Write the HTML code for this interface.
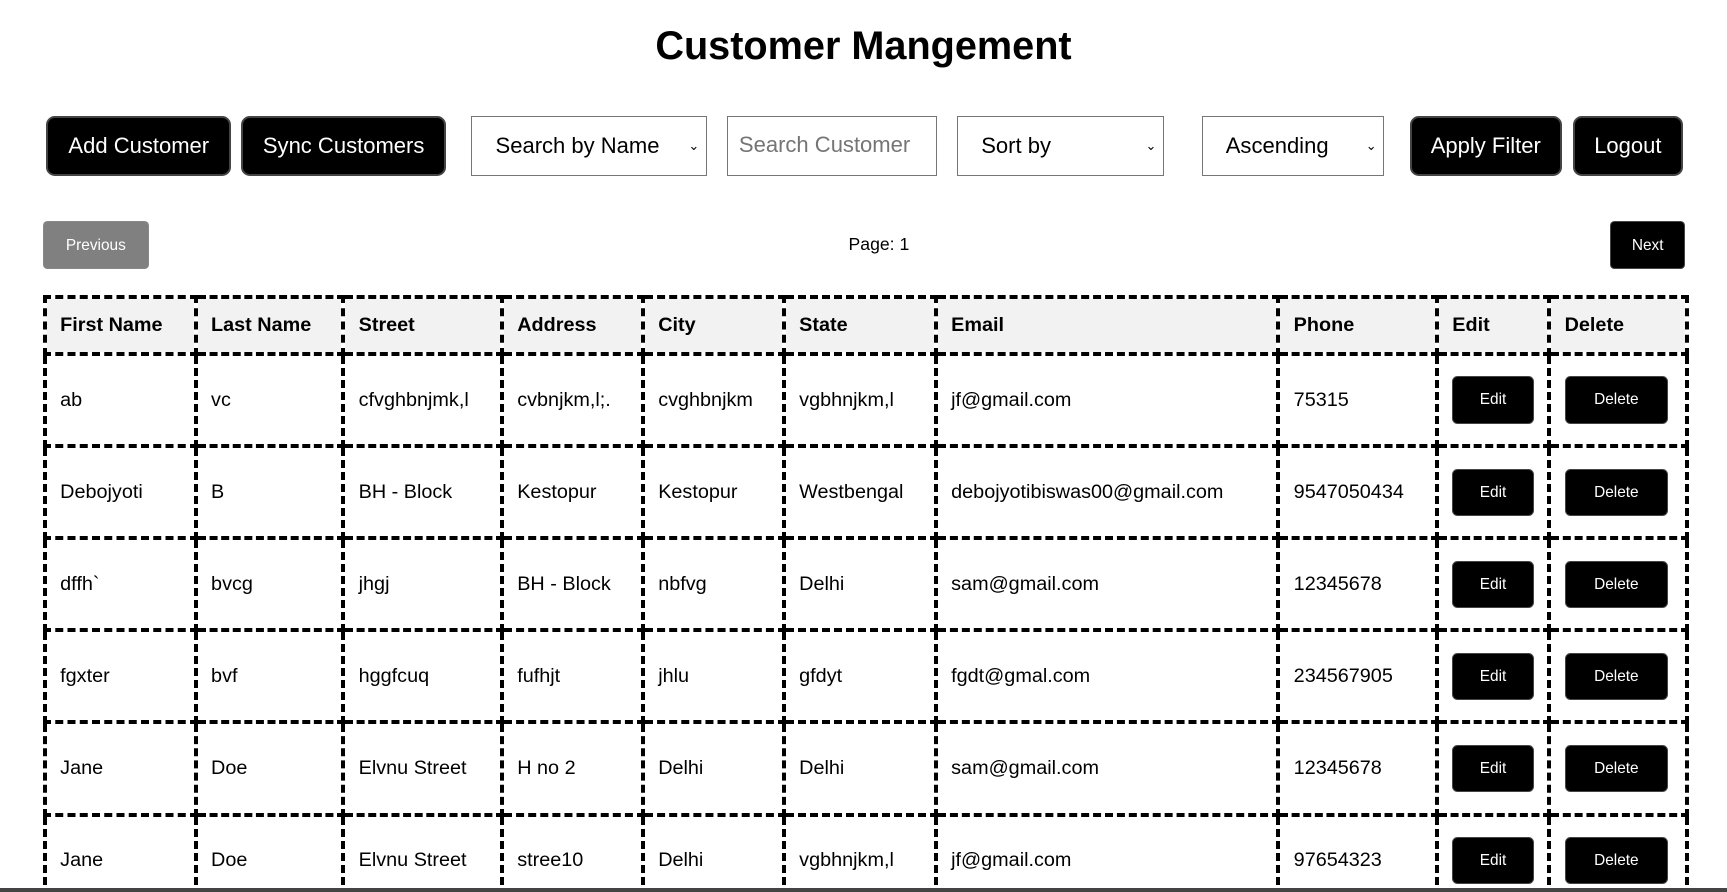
<!DOCTYPE html>
<html><head><meta charset="utf-8"><style>
html{zoom:1.1014;overflow:hidden}
body{margin:0;width:1568px;height:810px;overflow:hidden;background:#fff;font-family:"Liberation Sans",Arial,sans-serif;color:#000;position:relative}
#w{position:absolute;left:0;top:0;width:1568px;height:806px;overflow:hidden}
h1{position:absolute;left:0;width:1568px;top:20px;margin:0;text-align:center;font-size:36px;font-weight:bold;line-height:44px}
.b{position:absolute;box-sizing:border-box;background:#000;color:#fff;border:2px solid #444;border-radius:8px;font-size:20px;text-align:center;top:105px;height:55px;line-height:51px}
.s{position:absolute;box-sizing:border-box;background:#fff;border:1px solid #767676;top:105px;height:55px;line-height:53px;font-size:20px;padding-left:21px}
.s .ar{position:absolute;right:6px;top:0;font-size:12px}
.pg{position:absolute;top:201px;height:43px;line-height:43px;font-size:14px;color:#fff;text-align:center;border-radius:4px;box-sizing:border-box}
table{position:absolute;left:39px;top:268px;width:1491px;border-collapse:collapse;table-layout:fixed;border:4px dashed #000}
td,th{border:4px dashed #000;padding:0 0 0 12px;text-align:left;font-size:18px;vertical-align:middle;white-space:nowrap;overflow:hidden}
th{background:#f2f2f2;height:48px;font-weight:bold}
td{height:80px}
.eb{display:inline-block;background:#000;color:#fff;border:1px solid #444;border-radius:5px;height:43px;line-height:41px;font-size:14px;text-align:center;box-sizing:border-box}
.bot{position:absolute;left:0;top:806px;width:1568px;height:4px;background:#444}
</style></head><body>
<div id="w">
<h1>Customer Mangement</h1>
<div class="b" style="left:42px;width:168px">Add Customer</div>
<div class="b" style="left:219px;width:186px">Sync Customers</div>
<div class="s" style="left:428px;width:214px">Search by Name<span class="ar">&#8964;</span></div>
<div class="s" style="left:660px;width:191px;color:#757575;padding-left:10px;line-height:51px">Search Customer</div>
<div class="s" style="left:869px;width:188px">Sort by<span class="ar">&#8964;</span></div>
<div class="s" style="left:1091px;width:166px">Ascending<span class="ar">&#8964;</span></div>
<div class="b" style="left:1280px;width:138px">Apply Filter</div>
<div class="b" style="left:1428px;width:100px">Logout</div>
<div class="pg" style="left:39px;width:96px;background:#808080;border:1px solid #888">Previous</div>
<div style="position:absolute;left:698px;width:200px;text-align:center;top:201px;line-height:43px;font-size:16px">Page: 1</div>
<div class="pg" style="left:1462px;width:68px;background:#000;border:1px solid #444">Next</div>
<table>
<colgroup><col style="width:137px"><col style="width:134px"><col style="width:144px"><col style="width:128px"><col style="width:128px"><col style="width:138px"><col style="width:311px"><col style="width:144px"><col style="width:102px"><col style="width:125px"></colgroup>
<tr><th>First Name</th><th>Last Name</th><th>Street</th><th>Address</th><th>City</th><th>State</th><th>Email</th><th>Phone</th><th>Edit</th><th>Delete</th></tr>
<tr><td>ab</td><td>vc</td><td>cfvghbnjmk,l</td><td>cvbnjkm,l;.</td><td>cvghbnjkm</td><td>vgbhnjkm,l</td><td>jf@gmail.com</td><td>75315</td><td><span class="eb" style="width:74px">Edit</span></td><td><span class="eb" style="width:94px">Delete</span></td></tr>
<tr><td>Debojyoti</td><td>B</td><td>BH - Block</td><td>Kestopur</td><td>Kestopur</td><td>Westbengal</td><td>debojyotibiswas00@gmail.com</td><td>9547050434</td><td><span class="eb" style="width:74px">Edit</span></td><td><span class="eb" style="width:94px">Delete</span></td></tr>
<tr><td>dffh`</td><td>bvcg</td><td>jhgj</td><td>BH - Block</td><td>nbfvg</td><td>Delhi</td><td>sam@gmail.com</td><td>12345678</td><td><span class="eb" style="width:74px">Edit</span></td><td><span class="eb" style="width:94px">Delete</span></td></tr>
<tr><td>fgxter</td><td>bvf</td><td>hggfcuq</td><td>fufhjt</td><td>jhlu</td><td>gfdyt</td><td>fgdt@gmal.com</td><td>234567905</td><td><span class="eb" style="width:74px">Edit</span></td><td><span class="eb" style="width:94px">Delete</span></td></tr>
<tr><td>Jane</td><td>Doe</td><td>Elvnu Street</td><td>H no 2</td><td>Delhi</td><td>Delhi</td><td>sam@gmail.com</td><td>12345678</td><td><span class="eb" style="width:74px">Edit</span></td><td><span class="eb" style="width:94px">Delete</span></td></tr>
<tr><td>Jane</td><td>Doe</td><td>Elvnu Street</td><td>stree10</td><td>Delhi</td><td>vgbhnjkm,l</td><td>jf@gmail.com</td><td>97654323</td><td><span class="eb" style="width:74px">Edit</span></td><td><span class="eb" style="width:94px">Delete</span></td></tr>
</table>
</div>
<div class="bot"></div>
</body></html>
